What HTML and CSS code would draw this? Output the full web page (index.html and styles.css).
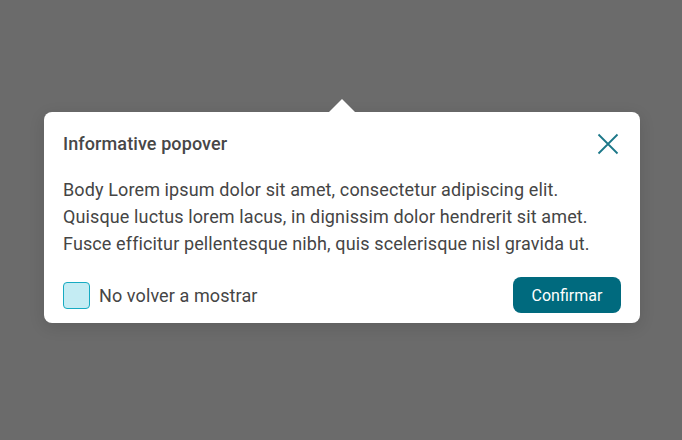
FILE: index.html
```html
<!DOCTYPE html>
<html>
<head>
<meta charset="utf-8">
<link rel="stylesheet" href="styles.css">
</head>
<body>
<div class="stage">
  <div class="popover">
    <span class="arrow"></span>
    <div class="header">
      <h2 class="title">Informative popover</h2>
      <button class="close" aria-label="Cerrar">
        <svg width="22" height="22" viewBox="0 0 22 22"><path d="M1.5 1.5 L20.5 20.5 M20.5 1.5 L1.5 20.5" stroke="#1b7788" stroke-width="1.8" fill="none"/></svg>
      </button>
    </div>
    <p class="body">Body Lorem ipsum dolor sit amet, consectetur adipiscing elit.<br>Quisque luctus lorem lacus, in dignissim dolor hendrerit sit amet.<br>Fusce efficitur pellentesque nibh, quis scelerisque nisl gravida ut.</p>
    <div class="footer">
      <label class="check"><span class="box"></span><span class="check-label">No volver a mostrar</span></label>
      <button class="confirm">Confirmar</button>
    </div>
  </div>
</div>
</body>
</html>
```
FILE: styles.css
```css
* { box-sizing: border-box; }
html, body { margin: 0; padding: 0; }
body {
  width: 682px;
  height: 440px;
  background: #6b6b6b;
  font-family: Roboto, "Liberation Sans", sans-serif;
  overflow: hidden;
}
.stage {
  padding: 112px 42px 0 44px;
}
.popover {
  position: relative;
  width: 596px;
  height: 211px;
  background: #fff;
  border-radius: 8px;
  box-shadow: 0 4px 16px rgba(0,0,0,0.12);
  padding: 20px 19px 0 19px;
  display: flex;
  flex-direction: column;
}
.arrow {
  position: absolute;
  left: 284px;
  top: -13px;
  width: 0;
  height: 0;
  border-left: 14px solid transparent;
  border-right: 14px solid transparent;
  border-bottom: 14px solid #fff;
}
.header {
  display: flex;
  justify-content: space-between;
  align-items: center;
  height: 24px;
}
.title {
  margin: 0;
  font-size: 18px;
  font-weight: 500;
  color: #474747;
  line-height: 24px;
  letter-spacing: 0.1px;
}
.close {
  border: 0;
  background: none;
  padding: 0;
  margin-right: 2px;
  width: 22px;
  height: 22px;
  display: flex;
}
.body {
  margin: 20px 0 0 0;
  font-size: 18px;
  line-height: 27px;
  color: #454545;
  letter-spacing: 0.12px;
}
.footer {
  margin-top: 20px;
  display: flex;
  justify-content: space-between;
  align-items: center;
}
.check {
  display: flex;
  align-items: center;
  gap: 9px;
}
.box {
  width: 27px;
  height: 27px;
  border: 1px solid #17abc2;
  background: #c4ecf3;
  border-radius: 4px;
}
.check-label {
  font-size: 18px;
  color: #454545;
  letter-spacing: 0.1px;
}
.confirm {
  width: 108px;
  height: 36px;
  border: 0;
  border-radius: 8px;
  background: #006a7e;
  color: #fff;
  font-family: Roboto, "Liberation Sans", sans-serif;
  font-size: 16px;
}
```
